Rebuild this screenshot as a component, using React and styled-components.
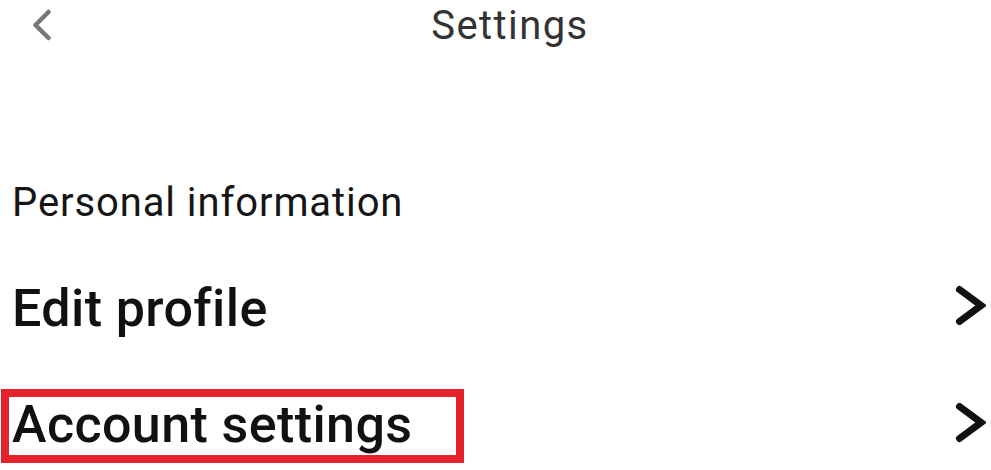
import React from 'react'
import styled, { createGlobalStyle } from 'styled-components'

const GlobalStyle = createGlobalStyle`
  html, body {
    margin: 0;
    padding: 0;
    background: #ffffff;
  }
  body {
    font-family: Roboto, "Noto Sans", "Liberation Sans", sans-serif;
    overflow: hidden;
  }
`

const Screen = styled.div`
  width: 991px;
  height: 470px;
  background: #ffffff;
  display: flex;
  flex-direction: column;
  overflow: hidden;
`

const Header = styled.header`
  display: grid;
  grid-template-columns: 60px 1fr 60px;
  align-items: start;
  padding: 2px 0 0 29px;
  height: 58px;
`

const BackButton = styled.button`
  border: 0;
  background: none;
  padding: 0;
  margin: 7px 0 0 3px;
  width: 20px;
  height: 32px;
  display: flex;
  cursor: pointer;
`

const Title = styled.h1`
  margin: 0;
  text-align: center;
  font-size: 40px;
  line-height: 48px;
  font-weight: 400;
  color: #333333;
  letter-spacing: 1.4px;
`

const Section = styled.section`
  display: flex;
  flex-direction: column;
  padding: 119px 5px 0 12px;
`

const SectionLabel = styled.div`
  font-size: 40px;
  line-height: 48px;
  font-weight: 400;
  color: #151515;
  letter-spacing: 0.9px;
  margin-bottom: 53px;
`

const Row = styled.div`
  display: flex;
  align-items: center;
  justify-content: space-between;
  margin-bottom: ${p => p.gap || 0}px;
`

const RowLabel = styled.span`
  font-size: 52px;
  line-height: ${p => (p.highlighted ? 56 : 58)}px;
  font-weight: 500;
  color: #111111;
  letter-spacing: 0.4px;
  ${p =>
    p.highlighted &&
    `
    margin-left: -11px;
    border: 8px solid #e5212b;
    padding: 0 44px 2px 3px;
  `}
`

const Chevron = styled.svg`
  flex-shrink: 0;
  margin-top: ${p => p.offset || 0}px;
`

const BackIcon = () => (
  <svg width='20' height='32' viewBox='0 0 20 32'>
    <polyline
      points='16.5,3 3.5,16 16.5,29'
      fill='none'
      stroke='#777777'
      strokeWidth='4.5'
      strokeLinecap='round'
      strokeLinejoin='round'
    />
  </svg>
)

const ChevronRight = ({ offset }) => (
  <Chevron offset={offset} width='31' height='41' viewBox='0 0 31 41'>
    <polyline
      points='4.5,4.5 26,20.5 4.5,36.5'
      fill='none'
      stroke='#111111'
      strokeWidth='7'
      strokeLinecap='round'
      strokeLinejoin='miter'
    />
  </Chevron>
)

export default function App () {
  return (
    <Screen>
      <GlobalStyle />
      <Header>
        <BackButton aria-label='Back'>
          <BackIcon />
        </BackButton>
        <Title>Settings</Title>
        <span />
      </Header>
      <Section>
        <SectionLabel>Personal information</SectionLabel>
        <Row gap={51}>
          <RowLabel>Edit profile</RowLabel>
          <ChevronRight offset={-8} />
        </Row>
        <Row>
          <RowLabel highlighted>Account settings</RowLabel>
          <ChevronRight offset={-8} />
        </Row>
      </Section>
    </Screen>
  )
}
